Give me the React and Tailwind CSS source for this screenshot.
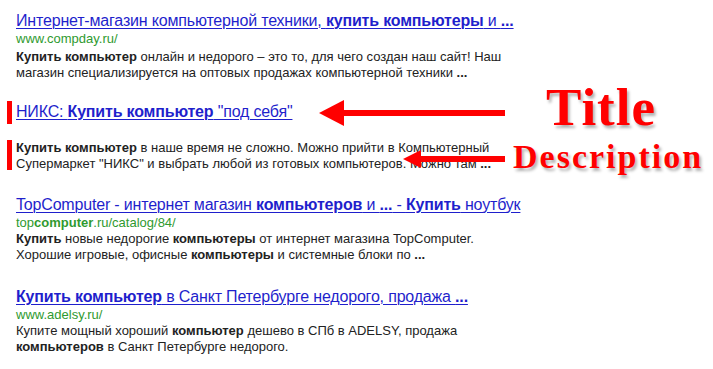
import React from 'react';

const results = [
  {
    title: (
      <>
        Интернет-магазин компьютерной техники, <b>купить компьютеры</b> и <b>...</b>
      </>
    ),
    url: 'www.compday.ru/',
    desc: (
      <>
        <b>Купить компьютер</b> онлайн и недорого – это то, для чего создан наш сайт! Наш
        <br />
        магазин специализируется на оптовых продажах компьютерной техники <b>...</b>
      </>
    ),
    wrap: 'pt-[11.5px]',
    descGap: 'mt-[2px]',
  },
  {
    title: (
      <>
        НИКС: <b>Купить компьютер</b> "под себя"
      </>
    ),
    url: null,
    desc: (
      <>
        <b>Купить компьютер</b> в наше время не сложно. Можно прийти в Компьютерный
        <br />
        Супермаркет "НИКС" и выбрать любой из готовых компьютеров. Можно там <b>...</b>
      </>
    ),
    wrap: 'mt-[22px]',
    descGap: 'mt-[2px]',
  },
  {
    title: (
      <>
        TopComputer - интернет магазин <b>компьютеров</b> и <b>...</b> - <b>Купить</b> ноутбук
      </>
    ),
    url: (
      <>
        top<b>computer</b>.ru/catalog/84/
      </>
    ),
    desc: (
      <>
        <b>Купить</b> новые недорогие <b>компьютеры</b> от интернет магазина TopComputer.
        <br />
        Хорошие игровые, офисные <b>компьютеры</b> и системные блоки по <b>...</b>
      </>
    ),
    wrap: 'mt-[24px]',
    descGap: '',
  },
  {
    title: (
      <>
        <b>Купить компьютер</b> в Санкт Петербурге недорого, продажа <b>...</b>
      </>
    ),
    url: 'www.adelsy.ru/',
    desc: (
      <>
        Купите мощный хороший <b>компьютер</b> дешево в СПб в ADELSY, продажа
        <br />
        <b>компьютеров</b> в Санкт Петербурге недорого.
      </>
    ),
    wrap: 'mt-[25px]',
    descGap: '',
  },
];

function Result({ r }) {
  return (
    <div className={`pl-[16px] ${r.wrap}`}>
      <a className="block whitespace-nowrap text-[16px] leading-[18px] tracking-[-0.18px] text-[#1f1fcc] underline decoration-1 underline-offset-[2px]">
        {r.title}
      </a>
      <div className="h-[17px] whitespace-nowrap text-[13px] leading-[17px] text-[#2f9a2f]">
        {r.url}
      </div>
      <p className={`whitespace-nowrap text-[13px] leading-[16px] text-[#222] ${r.descGap}`}>
        {r.desc}
      </p>
    </div>
  );
}

function Arrows() {
  return (
    <svg className="absolute left-0 top-0" width="713" height="369" viewBox="0 0 713 369">
      <rect x="340" y="110" width="165" height="6" fill="#ff0000" />
      <polygon points="319,113 344,100 344,126" fill="#ff0000" />
      <rect x="418" y="156" width="87" height="6" fill="#ff0000" />
      <polygon points="403,159 421,150 421,168" fill="#ff0000" />
    </svg>
  );
}

export default function App() {
  return (
    <div
      className="relative h-[369px] w-[713px] overflow-hidden bg-white"
      style={{ fontFamily: '"Liberation Sans", Arial, sans-serif' }}
    >
      {results.map((r, i) => (
        <Result key={i} r={r} />
      ))}

      {/* annotation marks */}
      <span className="absolute left-[7px] top-[101px] h-[23px] w-[5px] bg-[#ff0000]" />
      <span className="absolute left-[7px] top-[140px] h-[30px] w-[5px] bg-[#ff0000]" />
      <Arrows />
      <span
        className="absolute left-[546px] top-[80.5px] text-[53px] leading-none font-bold tracking-[1px] text-[#ff0000] [text-shadow:2px_3px_3px_rgba(0,0,0,0.3)]"
        style={{ fontFamily: '"Liberation Serif", Georgia, serif' }}
      >
        Title
      </span>
      <span
        className="absolute left-[513px] top-[139.5px] text-[34px] leading-none font-bold tracking-[2px] text-[#ff0000] [text-shadow:2px_3px_3px_rgba(0,0,0,0.3)]"
        style={{ fontFamily: '"Liberation Serif", Georgia, serif' }}
      >
        Description
      </span>
    </div>
  );
}
